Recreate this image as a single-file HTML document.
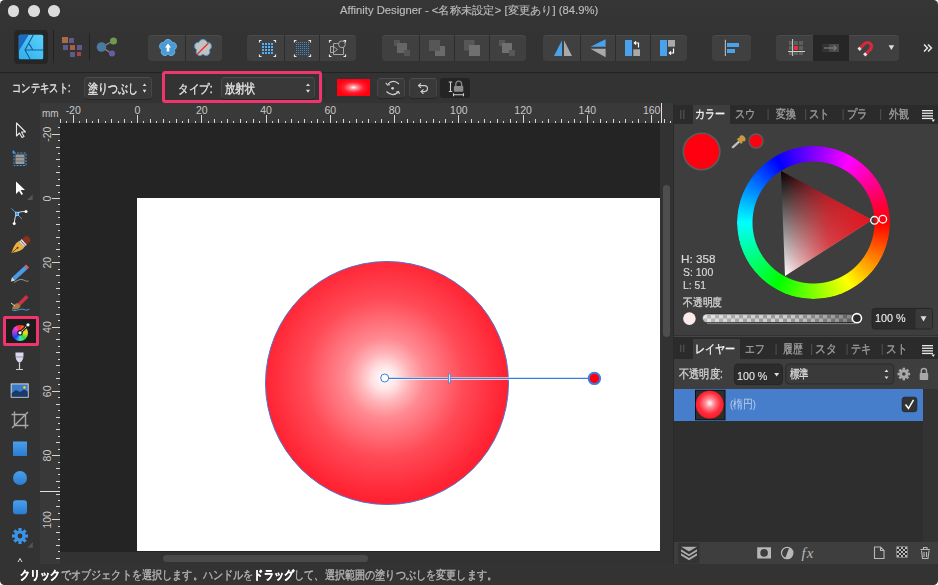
<!DOCTYPE html>
<html><head><meta charset="utf-8">
<style>
*{margin:0;padding:0;box-sizing:border-box}
html,body{width:938px;height:585px;overflow:hidden;background:#fff}
body{font-family:"Liberation Sans",sans-serif;position:relative}
.a{position:absolute}
svg{position:absolute;left:0;top:0}
#win{position:absolute;left:0;top:0;width:938px;height:585px;background:linear-gradient(#363636,#333 30px,#333);border-radius:4.5px;overflow:hidden}
.title{left:0;top:0;width:938px;height:22px;text-align:center;color:#c4c4c4;font-size:11.2px;line-height:21px}
.tl{width:11.4px;height:11.4px;border-radius:50%;background:#dcdcdc;top:5.2px}
.grp{background:#404040;border-radius:4px;top:35px;height:26px;box-shadow:inset 0 1px 0 #4a4a4a}
.dv{top:35px;width:1px;height:26px;background:#2d2d2d}
.sep{left:0;top:72px;width:938px;height:1px;background:#222}
.ctx{color:#e6e6e6;font-size:12px;line-height:14px;white-space:nowrap}
.dd{background:#393939;border:1px solid #474747;border-top-color:#4e4e4e;border-bottom-color:#3a3a3a;border-radius:4px;height:22px;box-shadow:0 1px 0 #262626}
.ruler{background:#393939}
.panel{background:#3e3e3e}
.tabbar{background:#2b2b2b}
.tab{color:#9a9a9a;font-size:11.5px;line-height:14px;white-space:nowrap}
.tx{white-space:nowrap;transform-origin:0 0;-webkit-text-stroke:0.35px currentColor}
.tsep{width:1px;height:11px;background:#555}
</style></head><body>
<div id="win">
  <!-- title -->
    <div class="a tl" style="left:7.9px"></div>
  <div class="a tl" style="left:28.2px"></div>
  <div class="a tl" style="left:48.3px"></div>

  <!-- toolbar -->
  <div class="a" style="left:14px;top:30px;width:34px;height:34px;background:#262626;border-radius:4px"></div>
  <div class="a dv" style="left:53px;top:30px;height:33px;background:#222"></div>
  <div class="a dv" style="left:89px;top:33px;height:27px;background:#222"></div>

  <div class="a grp" style="left:148px;width:74px"></div>
  <div class="a dv" style="left:185px"></div>
  <div class="a grp" style="left:247px;width:109px"></div>
  <div class="a dv" style="left:284px"></div><div class="a dv" style="left:319px"></div>
  <div class="a grp" style="left:382px;width:144px"></div>
  <div class="a dv" style="left:419px"></div><div class="a dv" style="left:454px"></div><div class="a dv" style="left:489px"></div>
  <div class="a grp" style="left:543px;width:144px"></div>
  <div class="a dv" style="left:580px"></div><div class="a dv" style="left:615px"></div><div class="a dv" style="left:650px"></div>
  <div class="a grp" style="left:712px;width:39px"></div>
  <div class="a grp" style="left:776px;width:123px"></div>
  <div class="a" style="left:813px;top:35px;width:36px;height:26px;background:#262626"></div>

  <svg width="938" height="100" viewBox="0 0 938 100">
    <!-- affinity logo -->
    <defs>
      <linearGradient id="lg1" x1="1" y1="0" x2="0" y2="1"><stop offset="0" stop-color="#5cd0fa"/><stop offset="1" stop-color="#2cb0ee"/></linearGradient>
    </defs>
    <rect x="18.8" y="34.8" width="24.4" height="24.4" rx="1.5" fill="url(#lg1)"/>
    <path d="M20.3 34.8 H28.8 L18.8 51 V36.3 A1.5 1.5 0 0 1 20.3 34.8Z" fill="#1b6cc0"/>
    <path d="M33.4 34.8 L25 50 L30.2 59.2 M25 50 H43.2 M29.2 43.9 L32.9 50" stroke="#1a5896" stroke-width="1.1" fill="none"/>
    <!-- pixel persona -->
    <rect x="62" y="37" width="6" height="6" fill="#a86c42"/>
    <rect x="69" y="38" width="5" height="5" fill="#5f5a8c"/>
    <rect x="63" y="45" width="5" height="5" fill="#5f5a8c"/>
    <rect x="70" y="45" width="5" height="5" fill="#a8603e"/>
    <rect x="77" y="45" width="5" height="5" fill="#5f5a8c"/>
    <rect x="70" y="52" width="5" height="5" fill="#5f5a8c"/>
    <rect x="77" y="52" width="4" height="4" fill="#a84444"/>
    <!-- export persona -->
    <path d="M102 47 L113 41 M102 47 L112 54" stroke="#888" stroke-width="1.2"/>
    <circle cx="101.5" cy="47" r="4.8" fill="#4a7aa2"/>
    <circle cx="113.5" cy="41" r="3.5" fill="#6f9a4e"/>
    <circle cx="112" cy="53.5" r="3" fill="#665ea2"/>

    <!-- flower up -->
    <g transform="translate(168 48)">
      <g fill="#4a9ad4" stroke="#6ab8ec" stroke-width="1">
        <path d="M0,-8.5 C3,-8.5 4,-6 4.2,-5.5 C5,-5.8 8,-5.5 8.3,-2.5 C8.8,0.5 6.5,1.8 6.2,2 C6.8,2.8 7.5,5.5 5,7 C2.5,8.5 0.5,6.5 0,6 C-0.5,6.5 -2.5,8.5 -5,7 C-7.5,5.5 -6.8,2.8 -6.2,2 C-6.5,1.8 -8.8,0.5 -8.3,-2.5 C-8,-5.5 -5,-5.8 -4.2,-5.5 C-4,-6 -3,-8.5 0,-8.5Z"/>
      </g>
      <path d="M0,-4.5 L3,-0.5 H1.3 V3.5 H-1.3 V-0.5 H-3Z" fill="#fff"/>
    </g>
    <g transform="translate(203 48)">
      <path d="M0,-8.5 C3,-8.5 4,-6 4.2,-5.5 C5,-5.8 8,-5.5 8.3,-2.5 C8.8,0.5 6.5,1.8 6.2,2 C6.8,2.8 7.5,5.5 5,7 C2.5,8.5 0.5,6.5 0,6 C-0.5,6.5 -2.5,8.5 -5,7 C-7.5,5.5 -6.8,2.8 -6.2,2 C-6.5,1.8 -8.8,0.5 -8.3,-2.5 C-8,-5.5 -5,-5.8 -4.2,-5.5 C-4,-6 -3,-8.5 0,-8.5Z" fill="#c2c2c2" stroke="#4a9ad4" stroke-width="1"/>
      <path d="M5.5,-5 L-6,6.5" stroke="#e8302a" stroke-width="1.3"/>
    </g>

    <!-- selection icons -->
    <g fill="none" stroke="#e8e8e8" stroke-width="1.2">
      <path d="M259.5 42.5 V40.5 H261.5 M273.5 40.5 H275.5 V42.5 M275.5 54.5 V56.5 H273.5 M261.5 56.5 H259.5 V54.5"/>
      <path d="M294.5 42.5 V40.5 H296.5 M308.5 40.5 H310.5 V42.5 M310.5 54.5 V56.5 H308.5 M296.5 56.5 H294.5 V54.5"/>
      <path d="M329.5 42.5 V40.5 H331.5 M343.5 40.5 H345.5 V42.5 M345.5 54.5 V56.5 H343.5 M331.5 56.5 H329.5 V54.5"/>
    </g>
    <g fill="#50b0f8">
      <rect x="262" y="43" width="2" height="2"/><rect x="262" y="46" width="2" height="2"/><rect x="262" y="49" width="2" height="2"/><rect x="262" y="52" width="2" height="2"/><rect x="265" y="43" width="2" height="2"/><rect x="265" y="46" width="2" height="2"/><rect x="265" y="49" width="2" height="2"/><rect x="265" y="52" width="2" height="2"/><rect x="268" y="43" width="2" height="2"/><rect x="268" y="46" width="2" height="2"/><rect x="268" y="49" width="2" height="2"/><rect x="268" y="52" width="2" height="2"/><rect x="271" y="43" width="2" height="2"/><rect x="271" y="46" width="2" height="2"/><rect x="271" y="49" width="2" height="2"/><rect x="271" y="52" width="2" height="2"/>
    </g>
    <g fill="#3c8ad0">
      <rect x="296" y="42" width="1" height="1"/><rect x="296" y="44" width="1" height="1"/><rect x="296" y="46" width="1" height="1"/><rect x="296" y="48" width="1" height="1"/><rect x="296" y="50" width="1" height="1"/><rect x="296" y="52" width="1" height="1"/><rect x="296" y="54" width="1" height="1"/><rect x="298" y="42" width="1" height="1"/><rect x="298" y="44" width="1" height="1"/><rect x="298" y="46" width="1" height="1"/><rect x="298" y="48" width="1" height="1"/><rect x="298" y="50" width="1" height="1"/><rect x="298" y="52" width="1" height="1"/><rect x="298" y="54" width="1" height="1"/><rect x="300" y="42" width="1" height="1"/><rect x="300" y="44" width="1" height="1"/><rect x="300" y="46" width="1" height="1"/><rect x="300" y="48" width="1" height="1"/><rect x="300" y="50" width="1" height="1"/><rect x="300" y="52" width="1" height="1"/><rect x="300" y="54" width="1" height="1"/><rect x="302" y="42" width="1" height="1"/><rect x="302" y="44" width="1" height="1"/><rect x="302" y="46" width="1" height="1"/><rect x="302" y="48" width="1" height="1"/><rect x="302" y="50" width="1" height="1"/><rect x="302" y="52" width="1" height="1"/><rect x="302" y="54" width="1" height="1"/><rect x="304" y="42" width="1" height="1"/><rect x="304" y="44" width="1" height="1"/><rect x="304" y="46" width="1" height="1"/><rect x="304" y="48" width="1" height="1"/><rect x="304" y="50" width="1" height="1"/><rect x="304" y="52" width="1" height="1"/><rect x="304" y="54" width="1" height="1"/><rect x="306" y="42" width="1" height="1"/><rect x="306" y="44" width="1" height="1"/><rect x="306" y="46" width="1" height="1"/><rect x="306" y="48" width="1" height="1"/><rect x="306" y="50" width="1" height="1"/><rect x="306" y="52" width="1" height="1"/><rect x="306" y="54" width="1" height="1"/><rect x="308" y="42" width="1" height="1"/><rect x="308" y="44" width="1" height="1"/><rect x="308" y="46" width="1" height="1"/><rect x="308" y="48" width="1" height="1"/><rect x="308" y="50" width="1" height="1"/><rect x="308" y="52" width="1" height="1"/><rect x="308" y="54" width="1" height="1"/>
    </g>
    <g fill="none" stroke="#a8a8a8" stroke-width="1">
      <path d="M336.5 43.5 H338.6 M343.5 47 V54.5 H333.5 V43.5 H336.5"/>
      <circle cx="341.9" cy="44.3" r="3.4"/>
      <path d="M330.5 46.5 H333.5 V52.5 H330.5 Z M333.5 46.5 L337.5 49.5 L333.5 52.5"/>
    </g>

    <!-- arrange icons -->
    <rect x="394" y="40" width="6" height="6" fill="#555"/>
    <rect x="397" y="43" width="10" height="10" fill="#666"/>
    <rect x="404" y="50" width="6" height="6" fill="#555"/>
    <rect x="429" y="40" width="11" height="11" fill="#575757"/>
    <path d="M435 56 V51 H440 V46 H445 V56Z" fill="#6a6a6a"/>
    <rect x="464" y="40" width="10.5" height="10.5" fill="#575757"/>
    <rect x="469" y="45" width="11" height="11" fill="#707070"/>
    <rect x="499" y="40" width="6" height="6" fill="#575757"/>
    <rect x="502" y="43" width="10" height="10" fill="#707070"/>
    <rect x="509" y="50" width="6" height="6" fill="#575757"/>

    <!-- flip/rotate -->
    <path d="M554 56 L562 40.3 V56Z" fill="#4aa2ea"/>
    <path d="M564 40.3 V56 H572Z" fill="#a9a9a9"/>
    <path d="M590.4 46.7 L605.6 39.2 V46.7Z" fill="#4aa2ea"/>
    <path d="M590.4 48.8 H605.6 V57.3Z" fill="#a9a9a9"/>
    <rect x="625" y="40" width="7" height="16" fill="#4aa2ea"/>
    <rect x="633.3" y="49.3" width="6.7" height="6.7" fill="#a9a9a9"/>
    <path d="M638.5 47.5 V43 H634.5 M636 41.3 L634.3 43 L636 44.7" stroke="#fff" stroke-width="1.2" fill="none"/>
    <rect x="660" y="40" width="7" height="16" fill="#4aa2ea"/>
    <rect x="668" y="40" width="7" height="6.7" fill="#a9a9a9"/>
    <path d="M673.5 48.5 V53 H669.5 M671 51.3 L669.3 53 L671 54.7" stroke="#fff" stroke-width="1.2" fill="none"/>

    <!-- align -->
    <rect x="724.8" y="39.8" width="1.2" height="16.2" fill="#b0b0b0"/>
    <rect x="727" y="43" width="12" height="4" fill="#4aa2ea"/>
    <rect x="727" y="49" width="8" height="4" fill="#4aa2ea"/>

    <!-- snapping -->
    <g fill="#5e5e5e">
      <rect x="789" y="41" width="4" height="4"/><rect x="794" y="41" width="4" height="4"/><rect x="799" y="41" width="4" height="4"/>
      <rect x="789" y="46" width="4" height="4"/><rect x="799" y="46" width="4" height="4"/>
      <rect x="789" y="51" width="4" height="4"/><rect x="794" y="51" width="4" height="4"/><rect x="799" y="51" width="4" height="4"/>
    </g>
    <rect x="794" y="46" width="4" height="4" fill="#e83030"/>
    <rect x="792.2" y="39" width="0.9" height="17" fill="#ddd"/>
    <rect x="788" y="51" width="17" height="0.9" fill="#ddd"/>
    <rect x="822" y="44" width="17" height="8" fill="#333"/>
    <rect x="829" y="44" width="10" height="8" fill="#4a4a4a"/>
    <path d="M824 48 H836 M833.5 45.5 L836.5 48 L833.5 50.5" stroke="#8a8a8a" stroke-width="1" fill="none"/>
    <!-- magnet -->
    <g transform="translate(867.5 46.5) rotate(-135)">
      <path d="M-4 -6 V0 A4 4 0 0 0 4 0 V-6" fill="none" stroke="#d62a3c" stroke-width="3.2"/>
      <rect x="-5.6" y="-8.6" width="3.2" height="2.8" fill="#e6e6e6"/>
      <rect x="2.4" y="-8.6" width="3.2" height="2.8" fill="#e6e6e6"/>
    </g>
    <path d="M888.6 45.2 H894.2 L891.4 50Z" fill="#ddd"/>
    <path d="M924 44.5 L927.5 48 L924 51.5 M928 44.5 L931.5 48 L928 51.5" stroke="#eee" stroke-width="1.4" fill="none"/>
  </svg>

  <div class="a sep"></div>

  <!-- context bar -->
    <div class="a dd" style="left:84px;top:77px;width:68px"></div>
  <div class="a" style="left:162px;top:71px;width:160px;height:32px;border:3px solid #f0356e;border-radius:3px"></div>
  <div class="a dd" style="left:221px;top:77px;width:94px"></div>
  <div class="a" style="left:324px;top:78px;width:1px;height:20px;background:#2a2a2a"></div>
  <div class="a" style="left:337px;top:79px;width:33px;height:17px;background:radial-gradient(ellipse 50% 50% at 50% 50%,#fff 0,#ff8890 25%,#ff2030 60%,#ff0010 100%)"></div>
  <div class="a dd" style="left:377px;top:78px;width:28px;height:20px"></div>
  <div class="a dd" style="left:409px;top:78px;width:28px;height:20px"></div>
  <div class="a" style="left:440px;top:78px;width:30px;height:20px;background:#242424;border-radius:3px"></div>
  <svg width="938" height="110" viewBox="0 0 938 110">
    <path d="M142.7 86 L144.5 83.6 L146.4 86Z M142.7 89.8 H146.4 L144.5 92.8Z" fill="#ddd"/>
    <path d="M306 86 L308 83.6 L310 86Z M306 89.8 H310 L308 92.8Z" fill="#ddd"/>
    <g fill="none" stroke="#cfcfcf" stroke-width="1.1">
      <path d="M387.5 84.5 Q393 78.5 399 84"/>
      <path d="M385.8 82.8 L387.3 85 L389.8 84.6"/>
      <path d="M386.5 91.5 Q392.5 97.5 398.5 92"/>
      <path d="M396 92.3 L398.5 91.5 L399.5 94"/>
      <path d="M418.5 85.6 H424.5 A3 3 0 0 1 424.5 91.6 H421.5"/>
      <path d="M421 83.3 L418.5 85.6 L421 87.9"/>
      <path d="M423.5 89.3 L421 91.6 L423.5 93.9"/>
      <path d="M450.5 82 V91.5 M448.8 82 H452.2 M448.8 91.5 H452.2"/>
      <path d="M453.5 94.7 H463.5 M453.5 93.2 V96.2 M463.5 93.2 V96.2"/>
    </g>
    <path d="M455.8 86.5 V84 A2.9 2.9 0 0 1 461.6 84 V86.5" fill="none" stroke="#8a8a8a" stroke-width="1.3"/>
    <rect x="453.9" y="86.1" width="9.4" height="5.6" rx="0.8" fill="#8a8a8a"/>
    <circle cx="392.6" cy="88.3" r="1.4" fill="#cfcfcf"/>
  </svg>

  <!-- rulers -->
  <div class="a ruler" style="left:40px;top:103px;width:633px;height:20px"></div>
  <div class="a ruler" style="left:40px;top:103px;width:20px;height:461px"></div>
  <svg width="938" height="585" viewBox="0 0 938 585" style="font-family:'Liberation Sans',sans-serif;font-size:10.5px" fill="#c8c8c8">
    <text x="42" y="117" font-size="10">mm</text>
    <rect x="60" y="119" width="1" height="4" fill="#d6d6d6"/>
<rect x="66" y="121" width="1" height="2" fill="#d6d6d6"/>
<rect x="73" y="115" width="1" height="8" fill="#d6d6d6"/>
<text x="73.23" y="113.6" text-anchor="middle">-20</text>
<rect x="79" y="121" width="1" height="2" fill="#d6d6d6"/>
<rect x="86" y="119" width="1" height="4" fill="#d6d6d6"/>
<rect x="92" y="121" width="1" height="2" fill="#d6d6d6"/>
<rect x="98" y="119" width="1" height="4" fill="#d6d6d6"/>
<rect x="105" y="121" width="1" height="2" fill="#d6d6d6"/>
<rect x="111" y="119" width="1" height="4" fill="#d6d6d6"/>
<rect x="118" y="121" width="1" height="2" fill="#d6d6d6"/>
<rect x="124" y="119" width="1" height="4" fill="#d6d6d6"/>
<rect x="131" y="121" width="1" height="2" fill="#d6d6d6"/>
<rect x="137" y="115" width="1" height="8" fill="#d6d6d6"/>
<text x="137.50" y="113.6" text-anchor="middle">0</text>
<rect x="143" y="121" width="1" height="2" fill="#d6d6d6"/>
<rect x="150" y="119" width="1" height="4" fill="#d6d6d6"/>
<rect x="156" y="121" width="1" height="2" fill="#d6d6d6"/>
<rect x="163" y="119" width="1" height="4" fill="#d6d6d6"/>
<rect x="169" y="121" width="1" height="2" fill="#d6d6d6"/>
<rect x="176" y="119" width="1" height="4" fill="#d6d6d6"/>
<rect x="182" y="121" width="1" height="2" fill="#d6d6d6"/>
<rect x="188" y="119" width="1" height="4" fill="#d6d6d6"/>
<rect x="195" y="121" width="1" height="2" fill="#d6d6d6"/>
<rect x="201" y="115" width="1" height="8" fill="#d6d6d6"/>
<text x="201.77" y="113.6" text-anchor="middle">20</text>
<rect x="208" y="121" width="1" height="2" fill="#d6d6d6"/>
<rect x="214" y="119" width="1" height="4" fill="#d6d6d6"/>
<rect x="221" y="121" width="1" height="2" fill="#d6d6d6"/>
<rect x="227" y="119" width="1" height="4" fill="#d6d6d6"/>
<rect x="233" y="121" width="1" height="2" fill="#d6d6d6"/>
<rect x="240" y="119" width="1" height="4" fill="#d6d6d6"/>
<rect x="246" y="121" width="1" height="2" fill="#d6d6d6"/>
<rect x="253" y="119" width="1" height="4" fill="#d6d6d6"/>
<rect x="259" y="121" width="1" height="2" fill="#d6d6d6"/>
<rect x="266" y="115" width="1" height="8" fill="#d6d6d6"/>
<text x="266.04" y="113.6" text-anchor="middle">40</text>
<rect x="272" y="121" width="1" height="2" fill="#d6d6d6"/>
<rect x="278" y="119" width="1" height="4" fill="#d6d6d6"/>
<rect x="285" y="121" width="1" height="2" fill="#d6d6d6"/>
<rect x="291" y="119" width="1" height="4" fill="#d6d6d6"/>
<rect x="298" y="121" width="1" height="2" fill="#d6d6d6"/>
<rect x="304" y="119" width="1" height="4" fill="#d6d6d6"/>
<rect x="311" y="121" width="1" height="2" fill="#d6d6d6"/>
<rect x="317" y="119" width="1" height="4" fill="#d6d6d6"/>
<rect x="323" y="121" width="1" height="2" fill="#d6d6d6"/>
<rect x="330" y="115" width="1" height="8" fill="#d6d6d6"/>
<text x="330.31" y="113.6" text-anchor="middle">60</text>
<rect x="336" y="121" width="1" height="2" fill="#d6d6d6"/>
<rect x="343" y="119" width="1" height="4" fill="#d6d6d6"/>
<rect x="349" y="121" width="1" height="2" fill="#d6d6d6"/>
<rect x="356" y="119" width="1" height="4" fill="#d6d6d6"/>
<rect x="362" y="121" width="1" height="2" fill="#d6d6d6"/>
<rect x="368" y="119" width="1" height="4" fill="#d6d6d6"/>
<rect x="375" y="121" width="1" height="2" fill="#d6d6d6"/>
<rect x="381" y="119" width="1" height="4" fill="#d6d6d6"/>
<rect x="388" y="121" width="1" height="2" fill="#d6d6d6"/>
<rect x="394" y="115" width="1" height="8" fill="#d6d6d6"/>
<text x="394.58" y="113.6" text-anchor="middle">80</text>
<rect x="401" y="121" width="1" height="2" fill="#d6d6d6"/>
<rect x="407" y="119" width="1" height="4" fill="#d6d6d6"/>
<rect x="413" y="121" width="1" height="2" fill="#d6d6d6"/>
<rect x="420" y="119" width="1" height="4" fill="#d6d6d6"/>
<rect x="426" y="121" width="1" height="2" fill="#d6d6d6"/>
<rect x="433" y="119" width="1" height="4" fill="#d6d6d6"/>
<rect x="439" y="121" width="1" height="2" fill="#d6d6d6"/>
<rect x="445" y="119" width="1" height="4" fill="#d6d6d6"/>
<rect x="452" y="121" width="1" height="2" fill="#d6d6d6"/>
<rect x="458" y="115" width="1" height="8" fill="#d6d6d6"/>
<text x="458.85" y="113.6" text-anchor="middle">100</text>
<rect x="465" y="121" width="1" height="2" fill="#d6d6d6"/>
<rect x="471" y="119" width="1" height="4" fill="#d6d6d6"/>
<rect x="478" y="121" width="1" height="2" fill="#d6d6d6"/>
<rect x="484" y="119" width="1" height="4" fill="#d6d6d6"/>
<rect x="490" y="121" width="1" height="2" fill="#d6d6d6"/>
<rect x="497" y="119" width="1" height="4" fill="#d6d6d6"/>
<rect x="503" y="121" width="1" height="2" fill="#d6d6d6"/>
<rect x="510" y="119" width="1" height="4" fill="#d6d6d6"/>
<rect x="516" y="121" width="1" height="2" fill="#d6d6d6"/>
<rect x="523" y="115" width="1" height="8" fill="#d6d6d6"/>
<text x="523.12" y="113.6" text-anchor="middle">120</text>
<rect x="529" y="121" width="1" height="2" fill="#d6d6d6"/>
<rect x="535" y="119" width="1" height="4" fill="#d6d6d6"/>
<rect x="542" y="121" width="1" height="2" fill="#d6d6d6"/>
<rect x="548" y="119" width="1" height="4" fill="#d6d6d6"/>
<rect x="555" y="121" width="1" height="2" fill="#d6d6d6"/>
<rect x="561" y="119" width="1" height="4" fill="#d6d6d6"/>
<rect x="568" y="121" width="1" height="2" fill="#d6d6d6"/>
<rect x="574" y="119" width="1" height="4" fill="#d6d6d6"/>
<rect x="580" y="121" width="1" height="2" fill="#d6d6d6"/>
<rect x="587" y="115" width="1" height="8" fill="#d6d6d6"/>
<text x="587.39" y="113.6" text-anchor="middle">140</text>
<rect x="593" y="121" width="1" height="2" fill="#d6d6d6"/>
<rect x="600" y="119" width="1" height="4" fill="#d6d6d6"/>
<rect x="606" y="121" width="1" height="2" fill="#d6d6d6"/>
<rect x="613" y="119" width="1" height="4" fill="#d6d6d6"/>
<rect x="619" y="121" width="1" height="2" fill="#d6d6d6"/>
<rect x="625" y="119" width="1" height="4" fill="#d6d6d6"/>
<rect x="632" y="121" width="1" height="2" fill="#d6d6d6"/>
<rect x="638" y="119" width="1" height="4" fill="#d6d6d6"/>
<rect x="645" y="121" width="1" height="2" fill="#d6d6d6"/>
<rect x="651" y="115" width="1" height="8" fill="#d6d6d6"/>
<text x="651.66" y="113.6" text-anchor="middle">160</text>
<rect x="658" y="121" width="1" height="2" fill="#d6d6d6"/>
<rect x="664" y="119" width="1" height="4" fill="#d6d6d6"/>
<rect x="670" y="121" width="1" height="2" fill="#d6d6d6"/>
    <rect x="58" y="127" width="2" height="1" fill="#d6d6d6"/>
<rect x="52" y="134" width="8" height="1" fill="#d6d6d6"/>
<text transform="translate(51.2 134.23) rotate(-90)" text-anchor="middle">-20</text>
<rect x="58" y="140" width="2" height="1" fill="#d6d6d6"/>
<rect x="56" y="147" width="4" height="1" fill="#d6d6d6"/>
<rect x="58" y="153" width="2" height="1" fill="#d6d6d6"/>
<rect x="56" y="159" width="4" height="1" fill="#d6d6d6"/>
<rect x="58" y="166" width="2" height="1" fill="#d6d6d6"/>
<rect x="56" y="172" width="4" height="1" fill="#d6d6d6"/>
<rect x="58" y="179" width="2" height="1" fill="#d6d6d6"/>
<rect x="56" y="185" width="4" height="1" fill="#d6d6d6"/>
<rect x="58" y="192" width="2" height="1" fill="#d6d6d6"/>
<rect x="52" y="198" width="8" height="1" fill="#d6d6d6"/>
<text transform="translate(51.2 198.50) rotate(-90)" text-anchor="middle">0</text>
<rect x="58" y="204" width="2" height="1" fill="#d6d6d6"/>
<rect x="56" y="211" width="4" height="1" fill="#d6d6d6"/>
<rect x="58" y="217" width="2" height="1" fill="#d6d6d6"/>
<rect x="56" y="224" width="4" height="1" fill="#d6d6d6"/>
<rect x="58" y="230" width="2" height="1" fill="#d6d6d6"/>
<rect x="56" y="237" width="4" height="1" fill="#d6d6d6"/>
<rect x="58" y="243" width="2" height="1" fill="#d6d6d6"/>
<rect x="56" y="249" width="4" height="1" fill="#d6d6d6"/>
<rect x="58" y="256" width="2" height="1" fill="#d6d6d6"/>
<rect x="52" y="262" width="8" height="1" fill="#d6d6d6"/>
<text transform="translate(51.2 262.77) rotate(-90)" text-anchor="middle">20</text>
<rect x="58" y="269" width="2" height="1" fill="#d6d6d6"/>
<rect x="56" y="275" width="4" height="1" fill="#d6d6d6"/>
<rect x="58" y="282" width="2" height="1" fill="#d6d6d6"/>
<rect x="56" y="288" width="4" height="1" fill="#d6d6d6"/>
<rect x="58" y="294" width="2" height="1" fill="#d6d6d6"/>
<rect x="56" y="301" width="4" height="1" fill="#d6d6d6"/>
<rect x="58" y="307" width="2" height="1" fill="#d6d6d6"/>
<rect x="56" y="314" width="4" height="1" fill="#d6d6d6"/>
<rect x="58" y="320" width="2" height="1" fill="#d6d6d6"/>
<rect x="52" y="327" width="8" height="1" fill="#d6d6d6"/>
<text transform="translate(51.2 327.04) rotate(-90)" text-anchor="middle">40</text>
<rect x="58" y="333" width="2" height="1" fill="#d6d6d6"/>
<rect x="56" y="339" width="4" height="1" fill="#d6d6d6"/>
<rect x="58" y="346" width="2" height="1" fill="#d6d6d6"/>
<rect x="56" y="352" width="4" height="1" fill="#d6d6d6"/>
<rect x="58" y="359" width="2" height="1" fill="#d6d6d6"/>
<rect x="56" y="365" width="4" height="1" fill="#d6d6d6"/>
<rect x="58" y="372" width="2" height="1" fill="#d6d6d6"/>
<rect x="56" y="378" width="4" height="1" fill="#d6d6d6"/>
<rect x="58" y="384" width="2" height="1" fill="#d6d6d6"/>
<rect x="52" y="391" width="8" height="1" fill="#d6d6d6"/>
<text transform="translate(51.2 391.31) rotate(-90)" text-anchor="middle">60</text>
<rect x="58" y="397" width="2" height="1" fill="#d6d6d6"/>
<rect x="56" y="404" width="4" height="1" fill="#d6d6d6"/>
<rect x="58" y="410" width="2" height="1" fill="#d6d6d6"/>
<rect x="56" y="417" width="4" height="1" fill="#d6d6d6"/>
<rect x="58" y="423" width="2" height="1" fill="#d6d6d6"/>
<rect x="56" y="429" width="4" height="1" fill="#d6d6d6"/>
<rect x="58" y="436" width="2" height="1" fill="#d6d6d6"/>
<rect x="56" y="442" width="4" height="1" fill="#d6d6d6"/>
<rect x="58" y="449" width="2" height="1" fill="#d6d6d6"/>
<rect x="52" y="455" width="8" height="1" fill="#d6d6d6"/>
<text transform="translate(51.2 455.58) rotate(-90)" text-anchor="middle">80</text>
<rect x="58" y="462" width="2" height="1" fill="#d6d6d6"/>
<rect x="56" y="468" width="4" height="1" fill="#d6d6d6"/>
<rect x="58" y="474" width="2" height="1" fill="#d6d6d6"/>
<rect x="56" y="481" width="4" height="1" fill="#d6d6d6"/>
<rect x="58" y="487" width="2" height="1" fill="#d6d6d6"/>
<rect x="56" y="494" width="4" height="1" fill="#d6d6d6"/>
<rect x="58" y="500" width="2" height="1" fill="#d6d6d6"/>
<rect x="56" y="506" width="4" height="1" fill="#d6d6d6"/>
<rect x="58" y="513" width="2" height="1" fill="#d6d6d6"/>
<rect x="52" y="519" width="8" height="1" fill="#d6d6d6"/>
<text transform="translate(51.2 519.85) rotate(-90)" text-anchor="middle">100</text>
<rect x="58" y="526" width="2" height="1" fill="#d6d6d6"/>
<rect x="56" y="532" width="4" height="1" fill="#d6d6d6"/>
<rect x="58" y="539" width="2" height="1" fill="#d6d6d6"/>
<rect x="56" y="545" width="4" height="1" fill="#d6d6d6"/>
<rect x="58" y="551" width="2" height="1" fill="#d6d6d6"/>
<rect x="56" y="558" width="4" height="1" fill="#d6d6d6"/>
    <rect x="661" y="103" width="1" height="20" fill="#e0e0e0"/>
    <rect x="40" y="491" width="20" height="1" fill="#e0e0e0"/>
  </svg>

  <!-- canvas -->
  <div class="a" style="left:60px;top:123px;width:600px;height:429px;background:#242424;overflow:hidden">
    <div class="a" style="left:77px;top:75px;width:600px;height:353px;background:#fff"></div>
  </div>
  <svg width="938" height="585" viewBox="0 0 938 585">
    <defs>
      <radialGradient id="rg" gradientUnits="userSpaceOnUse" cx="384.7" cy="378" r="209" fx="384.7" fy="378">
        <stop offset="0" stop-color="#ffffff"/>
        <stop offset="0.06" stop-color="#ffe2e4"/>
        <stop offset="0.12" stop-color="#ffb4b8"/>
        <stop offset="0.19" stop-color="#ff8a92"/>
        <stop offset="0.38" stop-color="#ff4a56"/>
        <stop offset="0.58" stop-color="#ff2232"/>
        <stop offset="1" stop-color="#ff0a1a"/>
      </radialGradient>
    </defs>
    <circle cx="387" cy="383" r="121.5" fill="url(#rg)" stroke="#4f78d0" stroke-width="1"/>
    <line x1="389" y1="378.4" x2="588" y2="378.4" stroke="#fff" stroke-width="3" opacity="0.7"/>
    <line x1="389" y1="378.4" x2="588" y2="378.4" stroke="#3a7fe0" stroke-width="1.2"/>
    <rect x="448.4" y="373.9" width="1.8" height="9" fill="#fff" stroke="#3a7fe0" stroke-width="0.8"/>
    <circle cx="384.7" cy="378" r="4" fill="#fff" fill-opacity="0.5" stroke="#3a7fe0" stroke-width="1"/>
    <circle cx="594.4" cy="378.4" r="5.7" fill="#ff0010" stroke="#3a7fe0" stroke-width="2"/>
  </svg>

  <!-- scrollbars -->
  <div class="a" style="left:660px;top:123px;width:13px;height:441px;background:#323232"></div><div class="a" style="left:672.5px;top:103px;width:1.5px;height:461px;background:#2a2a2a"></div>
  <div class="a" style="left:663px;top:185px;width:7px;height:152px;background:#4e4e4e;border-radius:4px"></div>
  <div class="a" style="left:60px;top:552px;width:600px;height:12px;background:#323232"></div>
  <div class="a" style="left:163px;top:555px;width:205px;height:7px;background:#4a4a4a;border-radius:4px"></div>

  <!-- right panel: color -->
  <div class="a tabbar" style="left:674px;top:105px;width:264px;height:20px"></div>
  <div class="a panel" style="left:674px;top:124px;width:264px;height:211px"></div>
  <div class="a panel" style="left:693px;top:105px;width:37px;height:20px"></div>

  <!-- layers -->
  <div class="a tabbar" style="left:674px;top:336px;width:264px;height:23px"></div><div class="a" style="left:674px;top:336px;width:264px;height:1px;background:#464646"></div>
  <div class="a panel" style="left:674px;top:359px;width:264px;height:30px"></div>
  <div class="a panel" style="left:693px;top:339px;width:47px;height:20px"></div>
  <div class="a" style="left:674px;top:389px;width:249px;height:153px;background:#2e2e2e"></div>
  <div class="a" style="left:674px;top:389px;width:249px;height:32px;background:#467ecb"></div>
  <div class="a panel" style="left:674px;top:542px;width:264px;height:22px"></div>


  <div class="a" style="left:736.6px;top:145.6px;width:153.4px;height:153.4px;border-radius:50%;background:conic-gradient(from 90deg,#ff0000,#ffff00,#00ff00,#00ffff,#0000ff,#ff00ff,#ff0000);-webkit-mask:radial-gradient(circle,transparent 60.5px,#000 61.5px);mask:radial-gradient(circle,transparent 60.5px,#000 61.5px)"></div>
  <!-- color panel contents -->
  <svg width="938" height="585" viewBox="0 0 938 585">
    <defs>
      <linearGradient id="triBW" gradientUnits="userSpaceOnUse" x1="781" y1="171" x2="785" y2="276">
        <stop offset="0" stop-color="#000"/><stop offset="1" stop-color="#fff"/>
      </linearGradient>
      <linearGradient id="triR" gradientUnits="userSpaceOnUse" x1="872" y1="220" x2="783" y2="223.5">
        <stop offset="0" stop-color="#e4141e" stop-opacity="1"/><stop offset="0.5" stop-color="#e4141e" stop-opacity="0.72"/><stop offset="1" stop-color="#e4141e" stop-opacity="0"/>
      </linearGradient>
      <clipPath id="ring"><path fill-rule="evenodd" d="M813.3 145.6 A76.7 76.7 0 1 1 813.29 145.6 Z M813.3 161.3 A61 61 0 1 0 813.31 161.3 Z"/></clipPath>
    </defs>
    <circle cx="701.6" cy="151.5" r="18.3" fill="#ff0010" stroke="#5c5c5c" stroke-width="1.6"/>
    <circle cx="756" cy="141" r="7" fill="#ff0010" stroke="#5c5c5c" stroke-width="1.4"/>
    <!-- eyedropper -->
    <g transform="translate(731.2 148.6) rotate(-42)">
      <path d="M0 0 L2 -1.3 H11 V1.5 H2 Z" fill="#c4c4c4" stroke="#1e1e1e" stroke-width="0.5"/>
      <path d="M10.5 -3.2 H12.5 C13 -2 13.5 -2 14 -3.2 C15 -4 17.8 -3.5 17.8 0 C17.8 3.5 15 4 14 3.2 C13.5 2 13 2 12.5 3.2 H10.5 Z" fill="#c89a40"/>
    </g>
    
    <path d="M872 220 L781 171 L785 276 Z" fill="url(#triBW)"/>
    <path d="M872 220 L781 171 L785 276 Z" fill="url(#triR)"/>
    <circle cx="874.5" cy="220.3" r="3.8" fill="none" stroke="#fff" stroke-width="1.3"/>
    <circle cx="882.8" cy="219.2" r="3.8" fill="none" stroke="#fff" stroke-width="1.3"/>
    <!-- opacity -->
    <circle cx="689.4" cy="318.6" r="6.3" fill="#fdeaea"/>
    <defs>
      <pattern id="chk" width="8" height="8" patternUnits="userSpaceOnUse" x="703" y="314.5">
        <rect width="8" height="8" fill="#9a9a9a"/><rect width="4" height="4" fill="#d8d8d8"/><rect x="4" y="4" width="4" height="4" fill="#d8d8d8"/>
      </pattern>
      <linearGradient id="chkfade" x1="0" x2="1"><stop offset="0" stop-color="#fff" stop-opacity="0.35"/><stop offset="0.5" stop-color="#888" stop-opacity="0.1"/><stop offset="1" stop-color="#000" stop-opacity="0.45"/></linearGradient>
    </defs>
    <rect x="702.5" y="314" width="155" height="8.5" rx="4.2" fill="url(#chk)" stroke="#222" stroke-width="0.8"/>
    <rect x="702.5" y="314" width="155" height="8.5" rx="4.2" fill="url(#chkfade)"/>
    <path d="M707 323.6 H855" stroke="#8a8a8a" stroke-width="0.9"/>
    <circle cx="856.9" cy="318.2" r="4.6" fill="#2a2a2a" stroke="#fff" stroke-width="1.6"/>
    <rect x="872" y="308.4" width="60.4" height="20.6" rx="3" fill="#2c2c2c" stroke="#262626" stroke-width="1"/>
    <rect x="915.5" y="308.9" width="16.5" height="19.6" rx="2" fill="#3a3a3a"/>
    <path d="M920.5 316.3 H926.5 L923.5 321.5Z" fill="#dcdcdc"/>
    <!-- tab handles & seps -->
    <path d="M680.8 110 V119 M683.8 110 V119 M680.8 344.7 V352 M683.8 344.7 V352" stroke="#5a5a5a" stroke-width="1"/>
    <g fill="#4a4a4a">
      <rect x="767.5" y="109" width="1.2" height="11"/><rect x="805" y="109" width="1.2" height="11"/><rect x="842.5" y="109" width="1.2" height="11"/><rect x="880" y="109" width="1.2" height="11"/>
      <rect x="775.5" y="344" width="1.2" height="11"/><rect x="811" y="344" width="1.2" height="11"/><rect x="846.5" y="344" width="1.2" height="11"/><rect x="881.7" y="344" width="1.2" height="11"/>
    </g>
    <g fill="#e8e8e8">
      <rect x="922" y="110" width="11" height="1.3"/><rect x="922" y="112.6" width="11" height="1.3"/><rect x="922" y="115.2" width="11" height="1.3"/><rect x="922" y="117.8" width="11" height="1.3"/>
      <path d="M931.5 119.5 H935 L933.25 122Z"/>
      <rect x="922" y="345" width="11" height="1.3"/><rect x="922" y="347.6" width="11" height="1.3"/><rect x="922" y="350.2" width="11" height="1.3"/><rect x="922" y="352.8" width="11" height="1.3"/>
      <path d="M931.5 354.5 H935 L933.25 357Z"/>
    </g>
    <!-- layers controls -->
    <rect x="734.4" y="364.1" width="48" height="20.5" rx="3.5" fill="#2c2c2c" stroke="#262626" stroke-width="1"/>
    <path d="M774.2 373 H779.2 L776.7 376.5Z" fill="#e0e0e0"/>
    <rect x="785.7" y="364" width="108" height="20" rx="3.5" fill="#3a3a3a" stroke="#2a2a2a" stroke-width="1"/>
    <path d="M884.5 372 L886.5 369.5 L888.5 372Z M884.5 376.5 H888.5 L886.5 379Z" fill="#ddd"/>
    <g transform="translate(903.8 374)" fill="#a8a8a8">
      <circle r="4.6"/>
      <rect x="-1.3" y="-6.3" width="2.6" height="12.6"/>
      <rect x="-1.3" y="-6.3" width="2.6" height="12.6" transform="rotate(45)"/>
      <rect x="-1.3" y="-6.3" width="2.6" height="12.6" transform="rotate(90)"/>
      <rect x="-1.3" y="-6.3" width="2.6" height="12.6" transform="rotate(135)"/>
      <circle r="1.8" fill="#3e3e3e"/>
    </g>
    <path d="M921.3 373 V371 A2.6 2.6 0 0 1 926.5 371 V373" fill="none" stroke="#a8a8a8" stroke-width="1.5"/>
    <rect x="919.7" y="373" width="8.5" height="7" rx="0.8" fill="#a8a8a8"/>
  </svg>

  <svg width="938" height="585" viewBox="0 0 938 585">
    <defs>
      <radialGradient id="thg" cx="0.5" cy="0.45" r="0.55">
        <stop offset="0" stop-color="#fff"/><stop offset="0.3" stop-color="#ff8a94"/><stop offset="0.7" stop-color="#ff2a3a"/><stop offset="1" stop-color="#ff1828"/>
      </radialGradient>
    </defs>
    <rect x="695.5" y="390.3" width="29.5" height="29.5" fill="#2e2e2e" stroke="#0e0e0e" stroke-width="1"/>
    <circle cx="709.7" cy="404.6" r="13.9" fill="url(#thg)"/>
    <rect x="902.2" y="397.2" width="14.6" height="14.5" rx="2.5" fill="#333" stroke="#222" stroke-width="0.8"/>
    <path d="M905.5 404.5 L908.5 408.5 L913.5 399.8" fill="none" stroke="#fff" stroke-width="1.5"/>
    <!-- bottom bar icons -->
    <rect x="678.4" y="543" width="21" height="20.5" fill="#333"/>
    <g fill="#acacac">
      <path d="M681 546.7 H697 L689 551.5 Z"/>
      <path d="M681 549.3 L689 554.2 L697 549.3 V551.5 L689 556.3 L681 551.5 Z"/>
      <path d="M681 553.2 L689 558 L697 553.2 V555.4 L689 560.2 L681 555.4 Z"/>
    </g>
    <rect x="757.2" y="547.3" width="13.8" height="11.2" fill="#b8b8b8"/>
    <circle cx="764.1" cy="552.9" r="3.8" fill="#3e3e3e"/>
    <circle cx="787.2" cy="553" r="5.7" fill="none" stroke="#b8b8b8" stroke-width="1.2"/>
    <path d="M787.2 547.3 A5.7 5.7 0 0 1 787.2 558.7 Z" fill="#b8b8b8" transform="rotate(20 787.2 553)"/>
    <text x="801.5" y="557.5" font-family="Liberation Serif" font-style="italic" font-size="15" letter-spacing="1" fill="#b8b8b8" style="-webkit-font-smoothing:antialiased">fx</text>
    <path d="M874.5 547 H880.5 L884 550.5 V558.5 H874.5 Z M880.5 547 V550.5 H884" fill="none" stroke="#b8b8b8" stroke-width="1.1"/>
    <g fill="#b8b8b8"><rect x="896.5" y="546.5" width="11" height="11" fill="#b8b8b8"/><rect x="897" y="549" width="2" height="2" fill="#2a2a2a"/><rect x="897" y="553" width="2" height="2" fill="#2a2a2a"/><rect x="899" y="547" width="2" height="2" fill="#2a2a2a"/><rect x="899" y="551" width="2" height="2" fill="#2a2a2a"/><rect x="899" y="555" width="2" height="2" fill="#2a2a2a"/><rect x="901" y="549" width="2" height="2" fill="#2a2a2a"/><rect x="901" y="553" width="2" height="2" fill="#2a2a2a"/><rect x="903" y="547" width="2" height="2" fill="#2a2a2a"/><rect x="903" y="551" width="2" height="2" fill="#2a2a2a"/><rect x="903" y="555" width="2" height="2" fill="#2a2a2a"/><rect x="905" y="549" width="2" height="2" fill="#2a2a2a"/><rect x="905" y="553" width="2" height="2" fill="#2a2a2a"/></g>
    <g fill="none" stroke="#b8b8b8" stroke-width="1.1">
      <path d="M920.5 549.5 H930 M923.5 549.5 V547.5 H927 V549.5 M921.5 550.5 L922.5 558.5 H928 L929 550.5 M924 552 V557 M926.5 552 V557"/>
    </g>
  </svg>

  <!-- tools -->
  <div class="a" style="left:3px;top:316px;width:36px;height:30px;border:3px solid #f0356e;border-radius:2px;background:#1c1c1c"></div>
  <div class="a" style="left:12px;top:324.8px;width:16px;height:16px;border-radius:50%;background:conic-gradient(#ff2a2a,#ffb020 50deg,#e8e020 90deg,#30e030 135deg,#40e0d0 180deg,#2040ff 225deg,#9040e0 270deg,#f040d0 315deg,#ff2a2a)"></div>
  <svg width="60" height="585" viewBox="0 0 60 585">
    <!-- move -->
    <path d="M16.5 123 V136 L19.5 133 L22 137.5 L24 136.5 L21.5 132 H25.5 Z" fill="none" stroke="#e6e6e6" stroke-width="1.1" stroke-linejoin="round"/>
    <!-- artboard -->
    <rect x="14" y="153" width="12" height="12.5" fill="none" stroke="#3a9ef0" stroke-width="1" stroke-dasharray="2 1.2"/>
    <rect x="15.5" y="154.5" width="9" height="9.5" fill="#9a9a9a"/>
    <path d="M15.5 157.5 H24.5 M15.5 161 H24.5" stroke="#666" stroke-width="0.8"/>
    <path d="M12 152 H15 M13.5 150.5 V153.5" stroke="#3a9ef0" stroke-width="1"/>
    <!-- node -->
    <path d="M16 181.5 V194 L19 191 L21.5 195 L23 194 L20.5 190 H25 Z" fill="#fff"/>
    <path d="M27 200 L32.7 194.4 V200 Z" fill="#555"/>
    <!-- corner -->
    <path d="M17 213.8 Q19 211.2 26 211.6 M17 213.8 Q14.5 217 14.2 223.4" stroke="#e6e6e6" stroke-width="1" fill="none"/>
    <path d="M11.5 208.3 L22 219" stroke="#3a9ef0" stroke-width="1"/>
    <rect x="15.3" y="212.1" width="3.4" height="3.4" fill="#3a9ef0" stroke="#cfe6ff" stroke-width="0.6"/>
    <circle cx="26" cy="211.6" r="1.5" fill="#fff"/><circle cx="14.2" cy="223.4" r="1.5" fill="#fff"/>
    <!-- pen -->
    <g transform="translate(11.2 253.3) rotate(-41)">
      <path d="M0 0 C4 -2 9 -5.2 13.5 -4.2 V4.2 C9 5.2 4 2 0 0Z" fill="#e8b040"/>
      <path d="M0 0 L8 0" stroke="#5a3a10" stroke-width="0.8"/>
      <circle cx="8.5" cy="0" r="1" fill="#5a3a10"/>
      <rect x="13.5" y="-3.8" width="4" height="7.6" fill="#d8d8d8"/>
      <path d="M15.5 -3.8 V3.8" stroke="#666" stroke-width="0.8"/>
      <path d="M17.5 -3.6 H22 C24.5 -3.6 24.5 3.6 22 3.6 H17.5Z" fill="#8a2e1e"/>
    </g>
    <!-- pencil -->
    <path d="M11 281.5 L12 277.5 L24.5 266 L27.5 269 L15 280.5 Z" fill="#4a9ae8"/>
    <path d="M24.5 266 L26 264.5 L29 267.5 L27.5 269Z" fill="#e86060"/>
    <path d="M11 281.5 L12 277.5 L15 280.5Z" fill="#f0d8b0"/>
    <path d="M14 282.5 C17 281 19 279 22 279.5 C25 280 26 282 28.5 281" stroke="#aaa" stroke-width="0.8" fill="none"/>
    <!-- brush -->
    <path d="M18 303 L26 295 L28.5 297.5 L20.5 305.5Z" fill="#d03040"/>
    <path d="M12 309 C13 305 15.5 303 18 303 L20.5 305.5 C20.5 308 17 310.5 12 309Z" fill="#b07840"/>
    <path d="M12 310 C16 312 20 308 24 309.5 C26 310.5 28 310 29.5 309" stroke="#3a9ef0" stroke-width="1" fill="none"/>
    <path d="M11 303 L15 306" stroke="#ddd" stroke-width="1"/>
    <!-- fill tool -->
    
    <circle cx="20" cy="332.8" r="2.8" fill="#1e1e1e"/>
    <path d="M20 332.8 L28 324.8" stroke="#1e1e1e" stroke-width="3"/>
    <path d="M20 332.8 L28 324.8" stroke="#fff" stroke-width="1" stroke-dasharray="1.5 0.8"/>
    <circle cx="20" cy="332.8" r="1.6" fill="#fff"/>
    <circle cx="28" cy="324.8" r="1.6" fill="#fff"/>
    <!-- transparency glass -->
    <path d="M15.5 352.5 H23.5 C23.8 358 22.5 362 19.5 362.5 C16.5 362 15.2 358 15.5 352.5Z" fill="#d8d8e8"/>
    <path d="M16 357 H23" stroke="#9098b8" stroke-width="1"/>
    <path d="M19.5 362.5 V369 M16 369.5 H23" stroke="#d0d0d0" stroke-width="1.2"/>
    <!-- place image -->
    <rect x="10.7" y="383.4" width="18" height="14.3" fill="#d8d8d8"/>
    <rect x="11.7" y="384.4" width="16" height="12.3" fill="#3a7cc8"/>
    <path d="M11.7 393 L16 390 L20 392 L24 389.5 L27.7 391.5 V396.7 H11.7Z" fill="#1a3a6a"/>
    <circle cx="24.5" cy="387.5" r="1.4" fill="#f0c040"/>
    <!-- crop -->
    <path d="M14.5 411.5 V425.5 H28.5 M11.5 414.5 H25.5 V428.5 M12 428 L28 412" fill="none" stroke="#a8a8a8" stroke-width="1.4"/>
    <!-- shapes -->
    <defs><linearGradient id="bl" x1="0" y1="0" x2="0" y2="1"><stop offset="0" stop-color="#4aa0ec"/><stop offset="1" stop-color="#2a7cd0"/></linearGradient></defs>
    <rect x="13" y="441.5" width="14" height="14.5" fill="url(#bl)"/>
    <circle cx="20" cy="478" r="7" fill="url(#bl)"/>
    <rect x="13" y="500.3" width="14" height="14" rx="3" fill="url(#bl)"/>
    <!-- gear -->
    <g transform="translate(20 536)" fill="#3a94e6">
      <circle r="5.6"/>
      <rect x="-1.6" y="-8" width="3.2" height="16"/>
      <rect x="-1.6" y="-8" width="3.2" height="16" transform="rotate(45)"/>
      <rect x="-1.6" y="-8" width="3.2" height="16" transform="rotate(90)"/>
      <rect x="-1.6" y="-8" width="3.2" height="16" transform="rotate(135)"/>
      <circle r="2.4" fill="#333"/>
    </g>
    <path d="M27.6 547.7 L32.8 541.9 V547.7 Z" fill="#555"/>
    <path d="M18 562 L20 558.5 L22 562" stroke="#ddd" stroke-width="1" fill="none"/>
  </svg>
  <div class="a tx" id="title" style="left:340.00px;top:4.60px;font-size:11px;line-height:11px;color:#bcbcbc;transform:scaleX(1.0238);-webkit-text-stroke:0.15px currentColor">Affinity Designer - &lt;名称未設定&gt; [変更あり] (84.9%)</div>
<div class="a tx" id="ctx1" style="left:11.87px;top:82.10px;font-size:12px;line-height:12px;color:#e4e4e4;transform:scaleX(0.7770);">コンテキスト:</div>
<div class="a tx" id="ctx2" style="left:87.65px;top:83.25px;font-size:12.5px;line-height:12.5px;color:#e8e8e8;transform:scaleX(0.7688);">塗りつぶし</div>
<div class="a tx" id="ctx3" style="left:177.74px;top:82.60px;font-size:12px;line-height:12px;color:#e4e4e4;transform:scaleX(0.8842);">タイプ:</div>
<div class="a tx" id="ctx4" style="left:224.82px;top:83.25px;font-size:12.5px;line-height:12.5px;color:#e8e8e8;transform:scaleX(0.7769);">放射状</div>
<div class="a tx" id="t1" style="left:695.42px;top:107.70px;font-size:12px;line-height:12px;color:#f0f0f0;transform:scaleX(0.8400);">カラー</div>
<div class="a tx" id="t2" style="left:734.60px;top:107.70px;font-size:12px;line-height:12px;color:#9c9c9c;transform:scaleX(0.8455);">スウ</div>
<div class="a tx" id="t3" style="left:776.00px;top:108.20px;font-size:12px;line-height:12px;color:#9c9c9c;transform:scaleX(0.8333);">変換</div>
<div class="a tx" id="t4" style="left:809.38px;top:107.70px;font-size:12px;line-height:12px;color:#9c9c9c;transform:scaleX(0.8700);">スト</div>
<div class="a tx" id="t5" style="left:846.76px;top:108.20px;font-size:12px;line-height:12px;color:#9c9c9c;transform:scaleX(0.8667);">プラ</div>
<div class="a tx" id="t6" style="left:889.00px;top:108.20px;font-size:12px;line-height:12px;color:#9c9c9c;transform:scaleX(0.8250);">外観</div>
<div class="a tx" id="h" style="left:680.79px;top:254.25px;font-size:11.5px;line-height:11.5px;color:#dcdcdc;transform:scaleX(1.0182);-webkit-text-stroke:0.15px currentColor">H: 358</div>
<div class="a tx" id="s" style="left:683.00px;top:267.25px;font-size:11.5px;line-height:11.5px;color:#dcdcdc;transform:scaleX(0.9091);-webkit-text-stroke:0.15px currentColor">S: 100</div>
<div class="a tx" id="l" style="left:683.24px;top:280.25px;font-size:11.5px;line-height:11.5px;color:#dcdcdc;transform:scaleX(0.8960);-webkit-text-stroke:0.15px currentColor">L: 51</div>
<div class="a tx" id="op" style="left:682.57px;top:296.60px;font-size:11px;line-height:11px;color:#d0d0d0;transform:scaleX(0.8932);">不透明度</div>
<div class="a tx" id="pct" style="left:875.00px;top:313.25px;font-size:11.5px;line-height:11.5px;color:#f2f2f2;transform:scaleX(0.9394);-webkit-text-stroke:0.1px currentColor">100 %</div>
<div class="a tx" id="L1" style="left:695.42px;top:342.70px;font-size:12px;line-height:12px;color:#f0f0f0;transform:scaleX(0.8426);">レイヤー</div>
<div class="a tx" id="L2" style="left:745.00px;top:342.70px;font-size:12px;line-height:12px;color:#9c9c9c;transform:scaleX(0.8136);">エフ</div>
<div class="a tx" id="L3" style="left:783.36px;top:343.20px;font-size:12px;line-height:12px;color:#9c9c9c;transform:scaleX(0.8083);">履歴</div>
<div class="a tx" id="L4" style="left:815.10px;top:342.70px;font-size:12px;line-height:12px;color:#9c9c9c;transform:scaleX(0.9048);">スタ</div>
<div class="a tx" id="L5" style="left:850.70px;top:342.70px;font-size:12px;line-height:12px;color:#9c9c9c;transform:scaleX(0.8500);">テキ</div>
<div class="a tx" id="L6" style="left:886.49px;top:342.70px;font-size:12px;line-height:12px;color:#9c9c9c;transform:scaleX(0.8900);">スト</div>
<div class="a tx" id="lop" style="left:679.37px;top:368.00px;font-size:12px;line-height:12px;color:#d0d0d0;transform:scaleX(0.8529);">不透明度:</div>
<div class="a tx" id="lpct" style="left:737.42px;top:370.65px;font-size:11.5px;line-height:11.5px;color:#e8e8e8;transform:scaleX(0.9312);-webkit-text-stroke:0.1px currentColor">100 %</div>
<div class="a tx" id="blend" style="left:790.47px;top:368.00px;font-size:12px;line-height:12px;color:#d8d8d8;transform:scaleX(0.7750);">標準</div>
<div class="a tx" id="lname" style="left:730.27px;top:399.45px;font-size:11.5px;line-height:11.5px;color:#bcd0ec;transform:scaleX(0.8194);-webkit-text-stroke:0px">(楕円)</div>
<div class="a tx" id="status" style="left:20.08px;top:569.85px;font-size:11.5px;line-height:11.5px;color:#b4b4b4;transform:scaleX(0.8459);"><b style="color:#fff">クリック</b>でオブジェクトを選択します。ハンドルを<b style="color:#fff">ドラッグ</b>して、選択範囲の塗りつぶしを変更します。</div>
</div>
</body></html>
